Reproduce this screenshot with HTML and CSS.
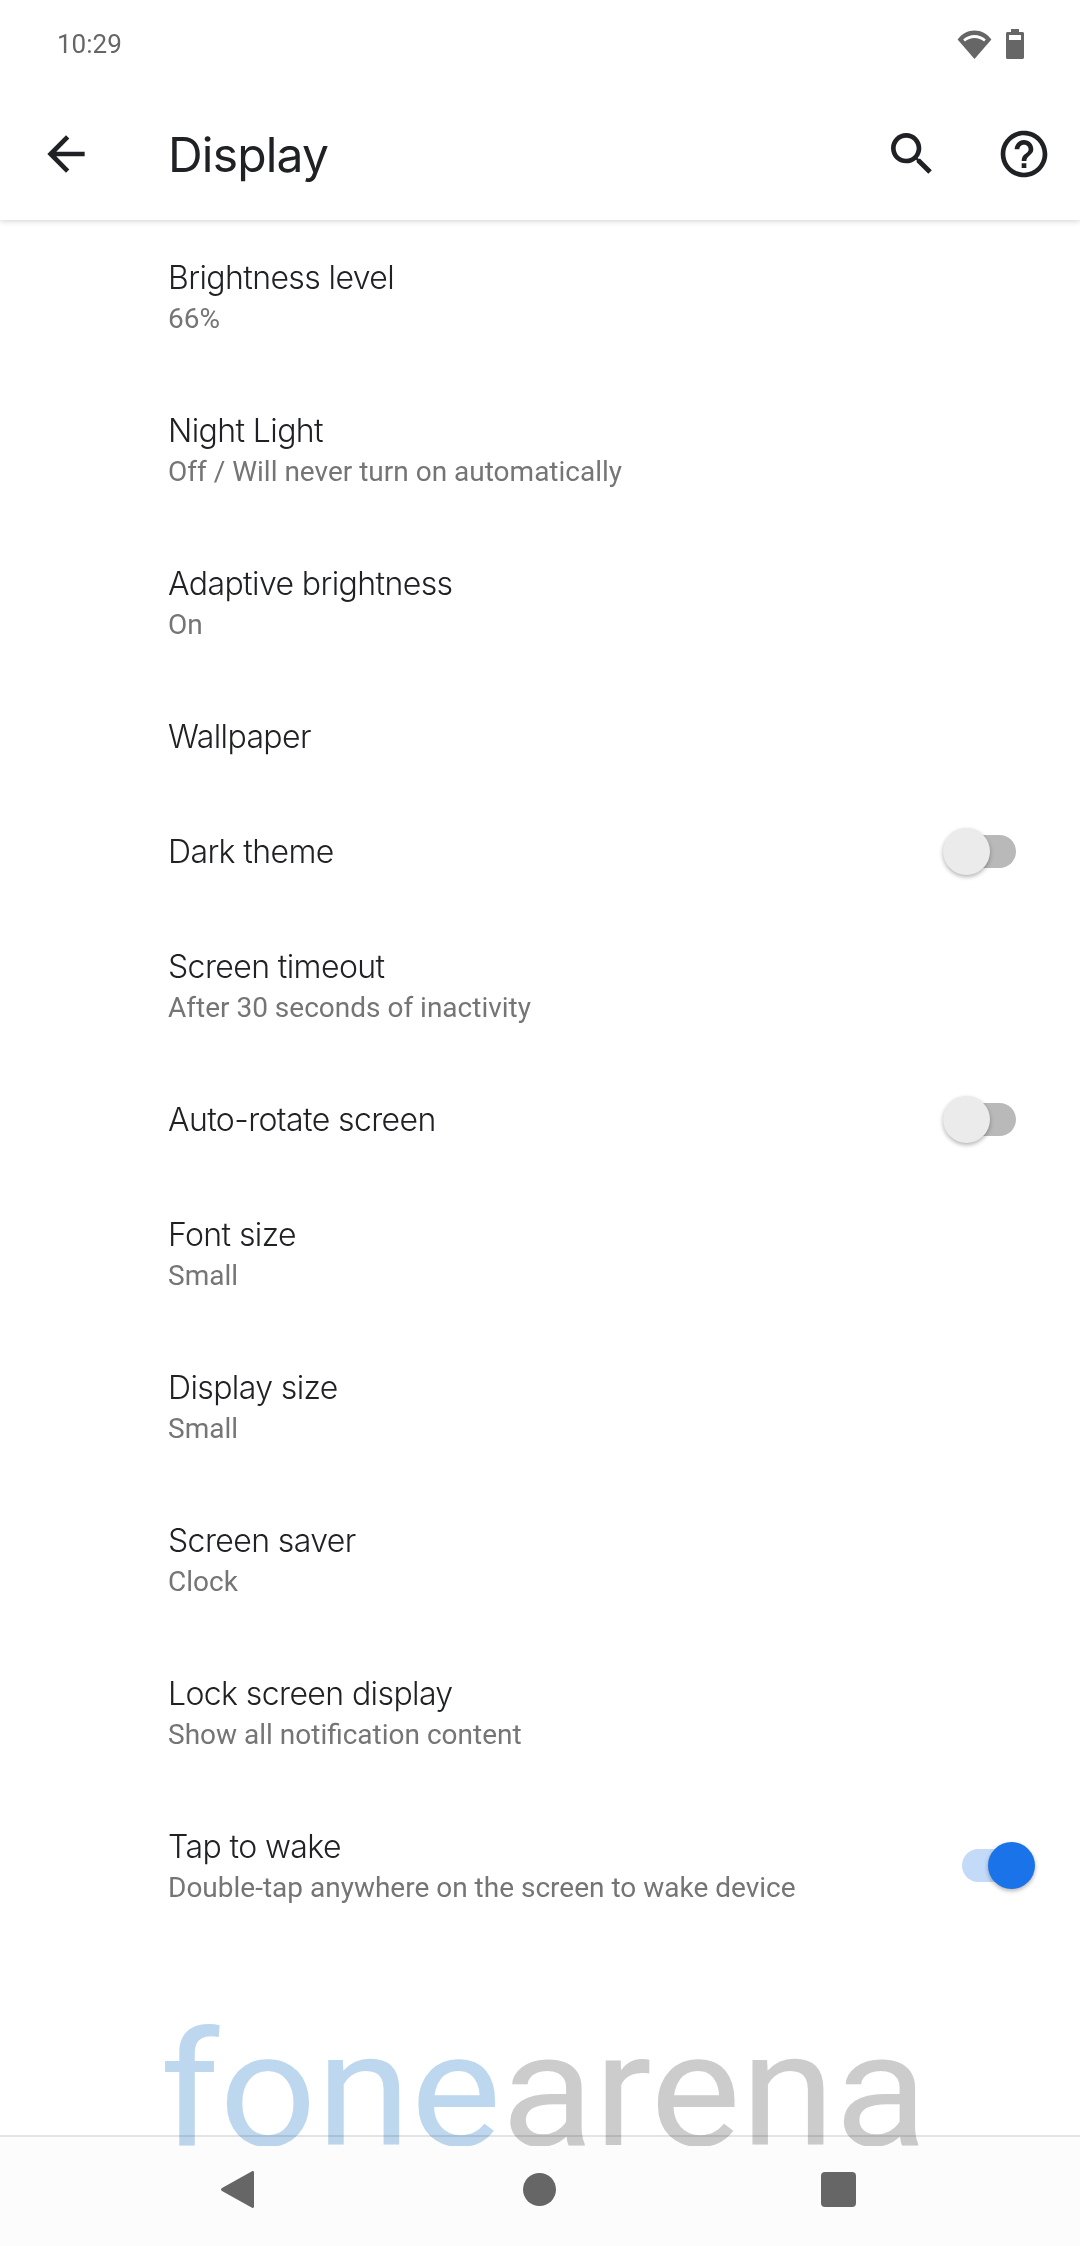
FILE: index.html
```html
<!DOCTYPE html>
<html lang="en">
<head>
<meta charset="utf-8">
<title>Display</title>
<link rel="stylesheet" href="styles.css">
</head>
<body>
<div class="screen">
  <header class="appbar">
    <div class="status">
      <span class="time">10:29</span>
      <div class="status-icons">
        <svg class="wifi" viewBox="0 0 35 29"><path class="grey" d="M17.5 29 0.6 9.6C5 3.6 11 0.6 17.5 0.6S30 3.6 34.4 9.6Z"/><path class="hole" d="M6.2 9.6C9.4 6.6 13.3 5 17.5 5s8.100 1.600 11.300 4.600l-1.700 2C24.400 9.200 21 8 17.500 8S10.600 9.200 7.900 11.600Z"/></svg>
        <svg class="battery" viewBox="0 0 18 30"><path class="grey" d="M5 0h8v3h3.500c.8 0 1.500.7 1.500 1.500v24c0 .8-.7 1.500-1.500 1.500h-15C.7 30 0 29.300 0 28.500v-24C0 3.700.7 3 1.500 3H5Z"/><rect class="hole" x="3" y="6" width="12" height="5"/></svg>
      </div>
    </div>
    <div class="toolbar">
      <svg class="icon back" viewBox="0 0 24 24"><path d="M20 11H7.830l5.590-5.590L12 4l-8 8 8 8 1.410-1.410L7.830 13H20v-2z"/></svg>
      <h1 class="title">Display</h1>
      <svg class="icon search" viewBox="0 0 24 24"><path d="M15.500 14h-.79l-.28-.27C15.410 12.590 16 11.110 16 9.500 16 5.910 13.090 3 9.500 3S3 5.910 3 9.500 5.910 16 9.500 16c1.610 0 3.090-.59 4.230-1.570l.27.28v.79l5 4.990L20.490 19l-4.990-5zm-6 0C7.010 14 5 11.990 5 9.500S7.010 5 9.500 5 14 7.010 14 9.500 11.990 14 9.500 14z"/></svg>
      <svg class="icon help" viewBox="0 0 24 24"><path d="M11 18h2v-2h-2v2zm1-16C6.480 2 2 6.480 2 12s4.480 10 10 10 10-4.480 10-10S17.520 2 12 2zm0 18c-4.410 0-8-3.590-8-8s3.590-8 8-8 8 3.590 8 8-3.590 8-8 8zm0-14c-2.210 0-4 1.790-4 4h2c0-1.100.9-2 2-2s2 .9 2 2c0 2-3 1.750-3 5h2c0-2.250 3-2.500 3-5 0-2.210-1.790-4-4-4z"/></svg>
    </div>
  </header>

  <main class="list">
    <div class="row two"><div class="label">Brightness level</div><div class="sub">66%</div></div>
    <div class="row two"><div class="label">Night Light</div><div class="sub">Off / Will never turn on automatically</div></div>
    <div class="row two"><div class="label">Adaptive brightness</div><div class="sub">On</div></div>
    <div class="row one"><div class="label">Wallpaper</div></div>
    <div class="row one"><div class="label">Dark theme</div><span class="switch"><span class="knob"></span></span></div>
    <div class="row two"><div class="label">Screen timeout</div><div class="sub">After 30 seconds of inactivity</div></div>
    <div class="row one"><div class="label">Auto-rotate screen</div><span class="switch"><span class="knob"></span></span></div>
    <div class="row two"><div class="label">Font size</div><div class="sub">Small</div></div>
    <div class="row two"><div class="label">Display size</div><div class="sub">Small</div></div>
    <div class="row two"><div class="label">Screen saver</div><div class="sub">Clock</div></div>
    <div class="row two"><div class="label">Lock screen display</div><div class="sub">Show all notification content</div></div>
    <div class="row two"><div class="label">Tap to wake</div><div class="sub">Double-tap anywhere on the screen to wake device</div><span class="switch on"><span class="knob"></span></span></div>
  </main>

  <nav class="navbar">
    <svg class="nav-back" viewBox="0 0 33 37"><path d="M31 .3c1.100-.6 2 .1 2 1.200v34c0 1.100-.9 1.800-2 1.200L1 20c-1.300-.8-1.300-2.200 0-3Z"/></svg>
    <span class="nav-home"></span>
    <span class="nav-recent"></span>
  </nav>

  <div class="watermark"><span class="mark"><span class="fone">fone</span><span class="arena">arena</span></span></div>
</div>
</body>
</html>
```

FILE: styles.css
```css
* { box-sizing: border-box; }
html, body { margin: 0; padding: 0; background: #fff; }
.screen {
  position: relative;
  width: 1080px;
  height: 2246px;
  overflow: hidden;
  display: flex;
  flex-direction: column;
  background: #fff;
  font-family: Inter, Roboto, sans-serif;
}

/* App bar */
.appbar {
  height: 220px;
  background: #fff;
  box-shadow: 0 1px 6px rgba(0, 0, 0, .18);
  position: relative;
  z-index: 1;
  flex: none;
}
.status {
  height: 88px;
  display: flex;
  align-items: center;
  justify-content: space-between;
  padding: 0 56px 0 57px;
}
.time { font: 400 26px/1 Roboto, sans-serif; color: #666; }
.status-icons { display: flex; align-items: center; gap: 14px; }
.wifi { width: 35px; height: 29px; display: block; }
.battery { width: 18px; height: 30px; display: block; }
.grey { fill: #666; }
.hole { fill: #fff; }
.toolbar {
  height: 132px;
  display: flex;
  align-items: center;
  padding: 0 28px 0 38px;
}
.icon { width: 56px; height: 56px; display: block; fill: #202124; flex: none; }
.title {
  margin: 2px 0 0 74px;
  flex: 1;
  font: 400 48px/1 Inter, sans-serif;
  letter-spacing: -.8px;
  color: #202124;
}
.search { margin-right: 56px; }

/* List */
.list { flex: 1; display: flex; flex-direction: column; }
.row {
  position: relative;
  padding: 3px 0 0 168px;
  display: flex;
  flex-direction: column;
  justify-content: center;
  flex: none;
}
.row.two { height: 153px; }
.row.one { height: 115px; padding-top: 1px; }
.label {
  font: 300 32px/40px Inter, sans-serif;
  letter-spacing: -.6px;
  color: #202124;
}
.sub {
  margin-top: 1px;
  font: 400 28px/40px Roboto, sans-serif;
  color: #757575;
}

/* Switches */
.switch {
  position: absolute;
  right: 64px;
  top: 50%;
  width: 66px;
  height: 33px;
  margin-top: -17px;
  border-radius: 17px;
  background: #b9b9b9;
}
.knob {
  position: absolute;
  left: -7px;
  top: -7px;
  width: 47px;
  height: 47px;
  border-radius: 50%;
  background: #ebebeb;
  box-shadow: 0 2px 4px rgba(0, 0, 0, .3);
}
.switch.on { right: 52px; background: #c3daf8; }
.switch.on .knob { left: 26px; background: #1a73e8; }

/* Nav bar */
.navbar {
  height: 111px;
  flex: none;
  position: relative;
  z-index: 2;
  background: #fcfcfc;
  border-top: 2px solid #e4e4e4;
  display: flex;
  align-items: center;
  padding: 0 0 4px 221px;
}
.nav-back { width: 33px; height: 37px; fill: #666; display: block; flex: none; }
.nav-home { width: 33px; height: 33px; border-radius: 50%; background: #666; margin-left: 269px; flex: none; }
.nav-recent { width: 35px; height: 35px; border-radius: 4px; background: #666; margin-left: 265px; flex: none; }

/* Watermark */
.watermark {
  position: absolute;
  left: 0;
  top: 2000px;
  width: 1080px;
  height: 146px;
  overflow: hidden;
  z-index: 3;
  padding: 11px 0 0 160px;
  white-space: nowrap;
  mix-blend-mode: multiply;
}
.mark {
  display: inline-block;
  font: 400 160px/160px Roboto, sans-serif;
  transform: scaleX(1.066);
  transform-origin: left top;
}
.fone { color: #bdd7ef; }
.arena { color: #cccccc; }
```
